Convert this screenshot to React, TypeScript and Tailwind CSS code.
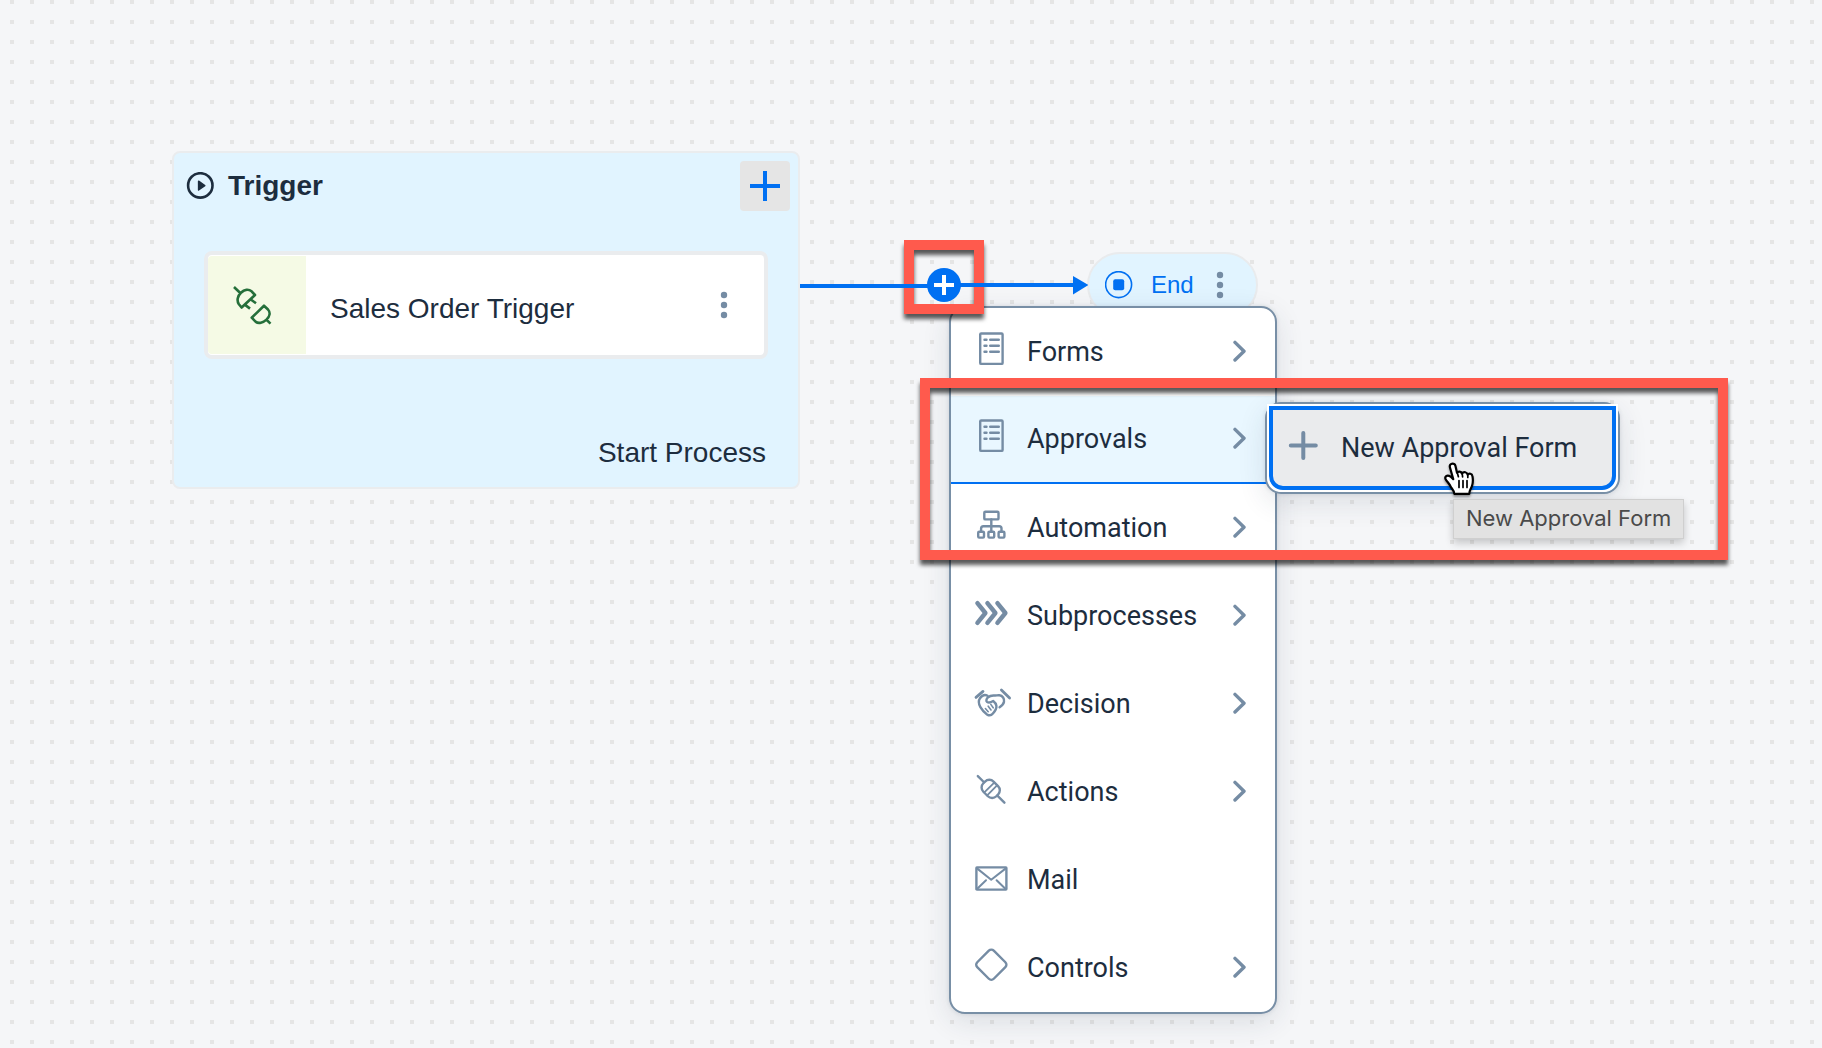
import type { ReactNode } from "react";

function Svg({ children }: { children: ReactNode }) {
  return (
    <svg
      viewBox="0 0 36 36"
      className="size-9 shrink-0 overflow-visible"
      fill="none"
      stroke="currentColor"
      strokeWidth="2.4"
      strokeLinecap="round"
      strokeLinejoin="round"
      aria-hidden="true"
    >
      {children}
    </svg>
  );
}

const FormIcon = () => (
  <Svg>
    <rect x="7.2" y="2.5" width="22.4" height="30.4" rx="1" />
    <path d="M11.5 8.7h2M17.2 8.7h8.6M11.5 14.7h2M17.2 14.7h8.6M11.5 20.7h2M17.2 20.7h8.6" />
  </Svg>
);

const AutomationIcon = () => (
  <Svg>
    <rect x="11.3" y="4.8" width="14.2" height="7.6" rx="1" />
    <path d="M18.3 12.4v11.5M8.1 24v-2.5q0-2.3 2.3-2.3h15.8q2.3 0 2.3 2.3V24" />
    <rect x="5.2" y="24.8" width="5.8" height="5.8" rx="1" />
    <rect x="15.4" y="24.8" width="5.8" height="5.8" rx="1" />
    <rect x="25.6" y="24.8" width="5.8" height="5.8" rx="1" />
  </Svg>
);

const SubprocessIcon = () => (
  <Svg>
    <path strokeWidth="4.4" d="M4.4 8.2l8 9.8-8 9.8M14.4 8.2l8 9.8-8 9.8M24.4 8.2l8 9.8-8 9.8" />
  </Svg>
);

const DecisionIcon = () => (
  <Svg>
    <path d="M3 14.4L10 8.4M28.4 7l8.2 8" strokeWidth="2.8" />
    <path d="M14.6 12.8c-3-1.6-6 .2-7.6 2.4-2 2.8-1.2 6 .4 9 1.6 2.8 4 5.4 6.6 7.2 2 1.3 4.4 1 5.9-.8 2.3-2.7 3.9-5 3.5-7.8-.3-2-1.7-3.7-3.2-4.8-1.8 1.2-4.8 2-6.2.8-1.4-1.3-.3-3.2 1-4.4 1.8-1.7 4-2.1 6.5-1.9 1.8.2 3-.4 4.8-.2 3.4.4 5.2 3.3 4.7 6.5-.4 2.5-2.2 4-4.4 5.5" />
    <path d="M12.4 25.5l2.8 3.2M15.2 23.2l2.8 3.8M17.8 21.4l2.4 3.4" strokeWidth="1.6" />
  </Svg>
);

const ActionIcon = () => (
  <Svg>
    <g transform="translate(17.7 17.9) rotate(45)">
      <path d="M-18.2 0H-9.4M9.4 0h10" />
      <rect x="-9.2" y="-7.2" width="18.4" height="14.4" rx="6" />
      <path d="M-2-7V7M2-7V7" strokeWidth="1.8" />
    </g>
  </Svg>
);

const MailIcon = () => (
  <Svg>
    <rect x="3.4" y="8.4" width="30" height="22.2" rx="0.5" />
    <path d="M4 9.4l14.2 11.4L32.8 9.4M4 30l9-8.8M32.6 30l-9-8.8" strokeWidth="2" />
  </Svg>
);

const ControlsIcon = () => (
  <Svg>
    <rect x="6.6" y="6" width="23.4" height="23.4" rx="3.5" transform="rotate(45 18.3 17.7)" />
  </Svg>
);

const PlusIcon = () => (
  <Svg>
    <path d="M18.3 6v25M5.8 18.5h25" strokeWidth="4" />
  </Svg>
);

const PlugIcon = () => (
  <svg
    viewBox="0 0 40 40"
    className="size-10 overflow-visible text-[#256f3a]"
    fill="none"
    stroke="currentColor"
    strokeWidth="2.6"
    strokeLinejoin="round"
    aria-hidden="true"
  >
    <path d="M2 2l6 5.8M23 10l-3.4-3.7c-3-2.4-7.2-2-10.7 1.4s-4.3 8.2-2 11.5l2.7 3.3zM18.5 14.3l5.5 4M12.8 19.6l5.2 4" />
    <path d="M32 20.7L19.7 32.7l4.1 4.2c2.6 1.8 7.2 1 10.7-2.3s4-7.2 1.5-10.1zM33.7 34l4.8 4.6" />
  </svg>
);

const Chevron = () => (
  <svg
    viewBox="0 0 14 24"
    className="h-6 w-3.5 shrink-0 text-[#758ca4]"
    fill="none"
    stroke="currentColor"
    strokeWidth="3.4"
    strokeLinecap="round"
    strokeLinejoin="round"
    aria-hidden="true"
  >
    <path d="M2 2.4l9 8.8-9 8.8" />
  </svg>
);

const Kebab = () => (
  <svg viewBox="0 0 8 28" className="h-7 w-2" fill="#758ca4" aria-hidden="true">
    <circle cx="4" cy="4" r="3.2" />
    <circle cx="4" cy="14" r="3.2" />
    <circle cx="4" cy="24" r="3.2" />
  </svg>
);

const items = [
  { label: "Forms", icon: <FormIcon />, more: true },
  { label: "Approvals", icon: <FormIcon />, more: true, active: true },
  { label: "Automation", icon: <AutomationIcon />, more: true },
  { label: "Subprocesses", icon: <SubprocessIcon />, more: true },
  { label: "Decision", icon: <DecisionIcon />, more: true },
  { label: "Actions", icon: <ActionIcon />, more: true },
  { label: "Mail", icon: <MailIcon />, more: false },
  { label: "Controls", icon: <ControlsIcon />, more: true },
];

function TriggerNode() {
  return (
    <section className="absolute top-[151px] left-[172px] flex w-[628px] flex-col rounded-lg border-2 border-[#eaecee] bg-[#e1f4ff] text-[28px] leading-8">
      <header className="flex items-center gap-3.5 pt-2 pr-2 pl-3">
        <svg viewBox="0 0 28 28" className="size-7" aria-hidden="true">
          <circle cx="14.3" cy="13.4" r="12.2" fill="none" stroke="#1d2d3e" strokeWidth="2.6" />
          <path d="M12.6 9.2l6.2 4.4-6.2 4.4z" fill="#1d2d3e" stroke="#1d2d3e" strokeWidth="1.5" strokeLinejoin="round" />
        </svg>
        <h2 className="grow font-bold">Trigger</h2>
        <button
          type="button"
          aria-label="Add trigger"
          className="flex size-[50px] items-center justify-center rounded bg-[#e5e5e5]"
        >
          <svg viewBox="0 0 30 30" className="size-[30px]" stroke="#0070f2" strokeWidth="4" aria-hidden="true">
            <path d="M15 0v30M0 15h30" />
          </svg>
        </button>
      </header>
      <div className="mx-[30px] mt-10 flex items-center rounded-lg border-4 border-[#eaecee] bg-white">
        <div className="my-px flex size-[98px] items-center rounded-l bg-[#f5fae5] pl-6">
          <PlugIcon />
        </div>
        <span className="grow pt-2 pl-6">Sales Order Trigger</span>
        <button type="button" aria-label="Trigger options" className="mr-9">
          <Kebab />
        </button>
      </div>
      <p className="px-8 pt-[78px] pb-[18px] text-right">Start Process</p>
    </section>
  );
}

function Connector() {
  return (
    <div className="absolute top-[268px] left-[800px] flex w-[288px] items-center">
      <svg viewBox="0 0 288 36" className="h-9 w-full" aria-hidden="true">
        <path d="M0 18h144" stroke="#0070f2" strokeWidth="4" />
        <path d="M144 17h132" stroke="#0070f2" strokeWidth="4" />
        <path d="M273 8l15.5 9-15.5 9.5z" fill="#0070f2" />
      </svg>
      <button
        type="button"
        aria-label="Add step"
        className="absolute top-0 left-[127px] flex size-[34px] items-center justify-center rounded-full bg-[#0070f2]"
      >
        <svg viewBox="0 0 20 20" className="size-5" stroke="#fff" strokeWidth="4" aria-hidden="true">
          <path d="M10 0v20M0 10h20" />
        </svg>
      </button>
    </div>
  );
}

function EndNode() {
  return (
    <div className="absolute top-[252px] left-[1087px] flex h-[66px] w-[171px] items-center rounded-full border-2 border-[#e9ebed] bg-[#e1f4ff] pl-4 text-2xl text-[#0070f2]">
      <svg viewBox="0 0 28 28" className="size-7" aria-hidden="true">
        <circle cx="13.6" cy="13.6" r="13" fill="none" stroke="#0070f2" strokeWidth="1.6" />
        <rect x="8.2" y="8.2" width="11" height="11" rx="2" fill="#0070f2" />
      </svg>
      <span className="ml-[18px]">End</span>
      <button type="button" aria-label="End options" className="ml-[22px]">
        <Kebab />
      </button>
    </div>
  );
}

function StepMenu() {
  return (
    <nav
      aria-label="Add step"
      className="absolute top-[306px] left-[949px] w-[328px] overflow-hidden rounded-2xl border-2 border-[#788fa6] bg-white font-['Roboto',sans-serif] text-[27px] leading-8 shadow-[0_0_4px_rgba(34,53,72,0.12),0_8px_28px_rgba(34,53,72,0.12)]"
    >
      {items.map((item) => (
        <button
          key={item.label}
          type="button"
          className={
            item.active
              ? "flex h-[88px] w-full items-center border-b-2 border-[#0070f2] bg-[#e9f7ff] pr-7 pl-[22px] text-left"
              : "flex h-[88px] w-full items-center pr-7 pl-[22px] text-left"
          }
        >
          <span className="pb-1.5 text-[#758ca4]">{item.icon}</span>
          <span className="grow pl-[18px]">{item.label}</span>
          {item.more && <Chevron />}
        </button>
      ))}
    </nav>
  );
}

function Submenu() {
  return (
    <div className="absolute top-[402px] left-[1265px] w-[355px] rounded-2xl border-2 border-[#788fa6] bg-white p-0.5 font-['Roboto',sans-serif] text-[27px] leading-8 shadow-[0_0_4px_rgba(34,53,72,0.12),0_8px_28px_rgba(34,53,72,0.12)]">
      <button
        type="button"
        className="flex h-[84px] w-full items-center rounded-b-[14px] border-4 border-[#0070f2] bg-[#eaebed] pl-3 shadow-[0_0_0_2px_#fff]"
      >
        <span className="pb-1.5 text-[#758ca4]">
          <PlusIcon />
        </span>
        <span className="pl-5">New Approval Form</span>
      </button>
    </div>
  );
}

function HandCursor() {
  return (
    <svg
      viewBox="0 0 32 34"
      className="pointer-events-none absolute top-[462px] left-[1444px] h-[34px] w-8 overflow-visible drop-shadow-[0_2px_1px_rgba(0,0,0,0.35)]"
      aria-hidden="true"
    >
      <path
        d="M8.6 1.6c-2 0-3.2 1.7-2.7 3.6l3.4 12c-1.5-1.8-3.6-3.8-5.6-3.6-2 .2-3 2-2.1 3.6 1.5 2.7 3.5 4 4.7 6.8 1 2.4 3.9 4.2 4 7.8h15c-.1-3.2 1.9-5 2.9-8.5.8-3 .7-7 .2-9.3-.4-2.5-3.4-3.2-4.8-1.3-.4-2.6-4-3.4-5.6-1.2-.8-2.2-3.8-2.6-5-.8L11.4 3.7c-.4-1.3-1.4-2.1-2.8-2.1z"
        fill="#fff"
        stroke="#000"
        strokeWidth="2.2"
        strokeLinejoin="round"
      />
      <path
        d="M13.2 10.5l1.2 4.2M18.2 11.5l.4 3.3M23.8 13v2.5M15 18.5v7M19 18.5v7M23 18.5v7"
        stroke="#000"
        strokeWidth="1.7"
        strokeLinecap="round"
      />
    </svg>
  );
}

export default function App() {
  return (
    <main className="relative min-h-screen overflow-hidden bg-[#f5f6f8] bg-[linear-gradient(90deg,#f5f6f8_10px,transparent_10px,transparent_14px,#f5f6f8_14px),linear-gradient(#e5e5e5_4px,#f5f6f8_4px)] bg-[size:20px_20px] font-['Liberation_Sans',Arial,sans-serif] text-[#1d2d3e]">
      <TriggerNode />
      <EndNode />
      <StepMenu />
      <div className="pointer-events-none absolute top-[240px] left-[904px] h-[74px] w-20 border-10 border-[#ff5a4d] drop-shadow-[0_5px_2px_rgba(0,0,0,0.65)]" />
      <Connector />
      <Submenu />
      <div className="pointer-events-none absolute top-[378px] left-[920px] h-[182px] w-[808px] border-10 border-[#ff5a4d] drop-shadow-[0_5px_2px_rgba(0,0,0,0.65)]" />
      <div
        role="tooltip"
        className="absolute top-[499px] left-[1453px] border border-[#cfcfcf] bg-[#e2e2e2] px-3 pt-[5px] pb-[7px] font-['Inter',sans-serif] text-[22px] leading-[26px] text-[#4a4a4a] shadow-[0_4px_8px_rgba(0,0,0,0.2)]"
      >
        New Approval Form
      </div>
      <HandCursor />
    </main>
  );
}
